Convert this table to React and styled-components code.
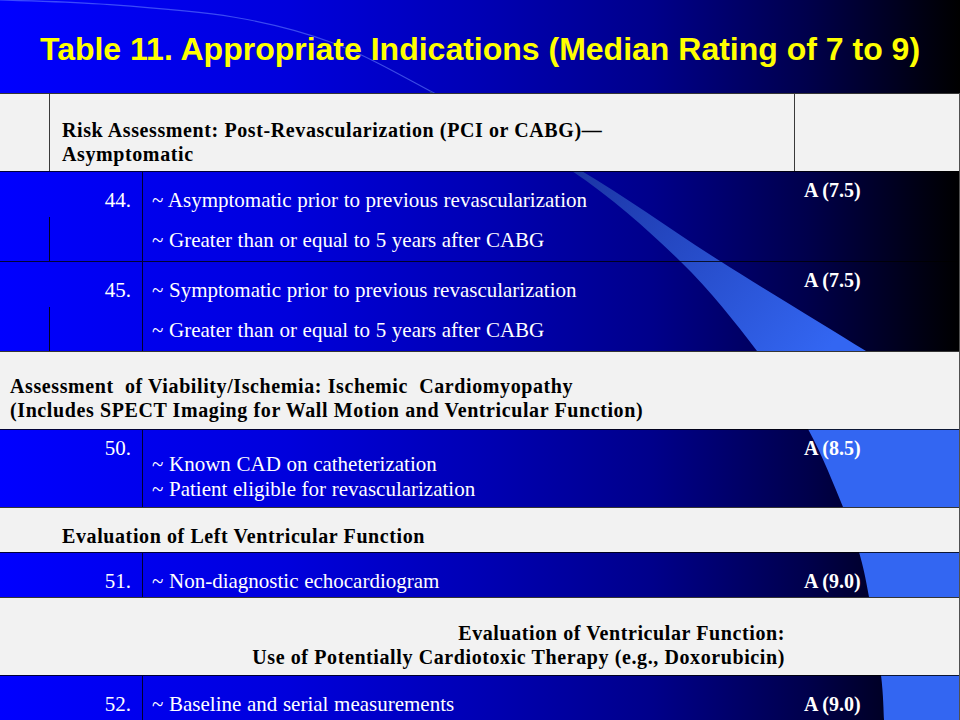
import React from 'react';
import styled, { createGlobalStyle } from 'styled-components';

const GlobalStyle = createGlobalStyle`
  html, body {
    margin: 0;
    padding: 0;
    background: #000;
  }
`;

// catmull-rom through the points, returned as C segments only
const curve = (pts) => {
  let d = '';
  for (let i = 0; i < pts.length - 1; i++) {
    const p0 = pts[i - 1] || pts[i];
    const p1 = pts[i];
    const p2 = pts[i + 1];
    const p3 = pts[i + 2] || p2;
    const c1x = p1[0] + (p2[0] - p0[0]) / 6;
    const c1y = p1[1] + (p2[1] - p0[1]) / 6;
    const c2x = p2[0] - (p3[0] - p1[0]) / 6;
    const c2y = p2[1] - (p3[1] - p1[1]) / 6;
    d += ` C ${c1x} ${c1y} ${c2x} ${c2y} ${p2[0]} ${p2[1]}`;
  }
  return d;
};

const outerEdge = [[430, 91], [580, 170], [720, 261], [866, 351], [960, 409]];
const innerEdge = [[884, 720], [881, 675], [869, 597], [859, 552], [843, 507], [808, 429], [757, 351], [680, 261], [572, 171], [430, 93]];
const arc = [[0, 0], [100, 4], [233, 17], [333, 43], [432, 92], [572, 171]];

const swooshPath = `M 430 91${curve(outerEdge)} L 960 720 L 884 720${curve(innerEdge)} Z`;
const arcPath = `M 0 0${curve(arc)}`;

const rows = [
  { type: 'head1', h: 78, text: ['Risk Assessment: Post-Revascularization (PCI or CABG)—', 'Asymptomatic'] },
  { type: 'item', h: 90, kind: 'tall', num: '44.', lines: ['~ Asymptomatic prior to previous revascularization', '~ Greater than or equal to 5 years after CABG'], rating: 'A (7.5)' },
  { type: 'item', h: 90, kind: 'tall', num: '45.', lines: ['~ Symptomatic prior to previous revascularization', '~ Greater than or equal to 5 years after CABG'], rating: 'A (7.5)' },
  { type: 'head', h: 78, pt: 22, pl: 10, text: ['Assessment  of Viability/Ischemia: Ischemic  Cardiomyopathy', '(Includes SPECT Imaging for Wall Motion and Ventricular Function)'] },
  { type: 'item', h: 78, kind: 'top', num: '50.', lines: ['~ Known CAD on catheterization', '~ Patient eligible for revascularization'], rating: 'A (8.5)' },
  { type: 'head', h: 45, pt: 16, pl: 62, text: ['Evaluation of Left Ventricular Function'] },
  { type: 'item', h: 45, kind: 'short', num: '51.', lines: ['~ Non-diagnostic echocardiogram'], rating: 'A (9.0)' },
  { type: 'head', h: 78, pt: 23, pr: 174, align: 'right', text: ['Evaluation of Ventricular Function:', 'Use of Potentially Cardiotoxic Therapy (e.g., Doxorubicin)'] },
  { type: 'item', h: 50, kind: 'short', num: '52.', lines: ['~ Baseline and serial measurements'], rating: 'A (9.0)' },
];

const spacing = {
  tall: { num: 8, text: 8, rate: 6, lh: 40 },
  top: { num: 6, text: 22, rate: 6, lh: 25 },
  short: { num: 16, text: 16, rate: 16, lh: 24 },
};

const App = () => {
  return (
    <Slide>
      <GlobalStyle />
      <Decor viewBox="0 0 960 720" width="960" height="720">
        <defs>
          <linearGradient id="swoosh" gradientUnits="userSpaceOnUse" x1="560" y1="160" x2="800" y2="380">
            <stop offset="0" stopColor="#1a32a0" />
            <stop offset="1" stopColor="#3366f2" />
          </linearGradient>
        </defs>
        <path d={arcPath} fill="none" stroke="#6c86ff" strokeOpacity="0.55" strokeWidth="1.2" />
        <path d={swooshPath} fill="url(#swoosh)" />
      </Decor>

      <Content>
        <Title>Table 11. Appropriate Indications (Median Rating of 7 to 9)</Title>
        <Table>
          {rows.map((row, i) => {
            if (row.type === 'head1') {
              return (
                <Row key={i} $h={row.h} $grey>
                  <Blank $divider />
                  <Heading $col="2 / 4" $pt={24} $pl={12} $divider>
                    {row.text.map(t => <div key={t}>{t}</div>)}
                  </Heading>
                  <Blank />
                </Row>
              );
            }
            if (row.type === 'head') {
              return (
                <Row key={i} $h={row.h} $grey>
                  <Heading $col="1 / -1" $pt={row.pt} $pl={row.pl || 0} $pr={row.pr || 0} $align={row.align}>
                    {row.text.map(t => <div key={t}>{t}</div>)}
                  </Heading>
                </Row>
              );
            }
            const s = spacing[row.kind];
            return (
              <Row key={i} $h={row.h}>
                <NumCell $pt={s.num} $lh={row.kind === 'tall' ? 40 : 24} $split={row.kind === 'tall'}>
                  {row.num}
                </NumCell>
                <ItemText $pt={s.text} $lh={s.lh}>
                  {row.lines.map(l => <div key={l}>{l}</div>)}
                </ItemText>
                <Rating $pt={s.rate}>{row.rating}</Rating>
              </Row>
            );
          })}
        </Table>
      </Content>
    </Slide>
  );
};

const Slide = styled.div`
  position: relative;
  width: 960px;
  height: 720px;
  overflow: hidden;
  background: linear-gradient(to right, #0000ff 0%, #0000dc 30%, #0000b4 50%, #00008a 68%, #00004c 84%, #000000 100%);
`;

const Decor = styled.svg`
  position: absolute;
  left: 0;
  top: 0;
  z-index: 0;
`;

const Content = styled.div`
  position: relative;
  z-index: 1;
`;

const Title = styled.h1`
  margin: 0;
  height: 93px;
  box-sizing: border-box;
  padding-top: 31px;
  text-align: center;
  white-space: nowrap;
  font-family: "Liberation Sans", Arial, sans-serif;
  font-weight: bold;
  font-size: 32px;
  line-height: 36px;
  color: #ffff00;
`;

const Table = styled.div`
  width: 959px;
  border-right: 1px solid #505050;
`;

const Row = styled.div`
  display: grid;
  grid-template-columns: 50px 93px 652px 1fr;
  height: ${p => p.$h}px;
  box-sizing: border-box;
  border-top: 1px solid rgba(0, 0, 0, 0.78);
  background: ${p => (p.$grey ? '#f2f2f2' : 'transparent')};
`;

const Blank = styled.div`
  border-right: ${p => (p.$divider ? '1px solid #3a3a3a' : 'none')};
`;

const Heading = styled.div`
  grid-column: ${p => p.$col};
  box-sizing: border-box;
  padding: ${p => p.$pt}px ${p => p.$pr || 0}px 0 ${p => p.$pl || 0}px;
  text-align: ${p => p.$align || 'left'};
  border-right: ${p => (p.$divider ? '1px solid #3a3a3a' : 'none')};
  font-family: "Liberation Serif", "Times New Roman", serif;
  font-weight: bold;
  font-size: 20px;
  line-height: 24px;
  letter-spacing: 0.6px;
  white-space: pre;
  color: #000;
`;

const NumCell = styled.div`
  grid-column: 1 / 3;
  position: relative;
  box-sizing: border-box;
  padding: ${p => p.$pt}px 11px 0 0;
  text-align: right;
  border-right: 1px solid rgba(0, 0, 0, 0.8);
  font-family: "Liberation Serif", "Times New Roman", serif;
  font-size: 21px;
  line-height: ${p => p.$lh}px;
  color: #fff;

  &::after {
    content: '';
    display: ${p => (p.$split ? 'block' : 'none')};
    position: absolute;
    left: 49px;
    top: 50%;
    bottom: 0;
    width: 1px;
    background: rgba(0, 0, 0, 0.85);
  }
`;

const ItemText = styled.div`
  grid-column: 3;
  padding: ${p => p.$pt}px 0 0 9px;
  font-family: "Liberation Serif", "Times New Roman", serif;
  font-size: 21px;
  line-height: ${p => p.$lh}px;
  word-spacing: 0.4px;
  white-space: nowrap;
  color: #fff;
`;

const Rating = styled.div`
  grid-column: 4;
  padding: ${p => p.$pt}px 0 0 9px;
  font-family: "Liberation Serif", "Times New Roman", serif;
  font-weight: bold;
  font-size: 20px;
  line-height: 24px;
  color: #fff;
`;

export default App;
